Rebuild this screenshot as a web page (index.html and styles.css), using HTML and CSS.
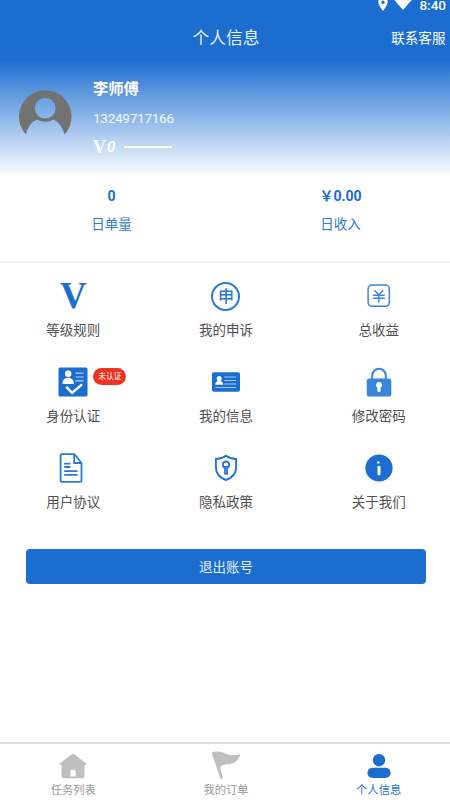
FILE: index.html
```html
<!DOCTYPE html>
<html lang="zh-CN">
<head>
<meta charset="utf-8">
<meta name="viewport" content="width=device-width, initial-scale=1">
<title>个人信息</title>
<link rel="stylesheet" href="styles.css">
</head>
<body>
<div class="page">
  <header class="top">
    <div class="status">
      <svg class="pin" width="10" height="14" viewBox="0 0 10 14"><path fill="#fff" fill-rule="evenodd" d="M5 0a4.700 4.700 0 0 0-4.700 4.700C.3 8.100 5 14 5 14s4.700-5.900 4.700-9.300A4.700 4.700 0 0 0 5 0zm0 3.500a1.700 1.700 0 1 1 0 3.400 1.700 1.700 0 0 1 0-3.400z"/></svg>
      <svg class="wifi" width="20" height="14" viewBox="0 0 20 14"><path fill="#fff" d="M0 2.500C5-1.200 15-1.200 20 2.500L10 14z"/></svg>
      <span>8:40</span>
    </div>
    <div class="titlebar">
      <h1>个人信息</h1>
      <a class="service">联系客服</a>
    </div>
  </header>

  <section class="profile">
    <svg class="avatar" width="54" height="54" viewBox="0 0 54 54"><path fill="#707372" fill-rule="evenodd" d="M8 44.500A26.300 26.300 0 1 1 46.500 44.500C44.500 37 40.500 31.500 35.500 29.500Q27.200 34 19 29.500C13.500 31.500 9.500 37 8 44.500zM27.200 7.800a10.400 10.400 0 1 0 0 20.800 10.400 10.400 0 0 0 0-20.800z"/></svg>
    <div class="who">
      <div class="name">李师傅</div>
      <div class="phone">13249717166</div>
      <div class="level"><span class="lv">V</span><span class="num">0</span><i class="bar"></i></div>
    </div>
  </section>

  <section class="stats">
    <div><b>0</b><span>日单量</span></div>
    <div><b>￥0.00</b><span>日收入</span></div>
  </section>

  <section class="menu">
    <div class="item"><div class="icon big-v">V</div><span>等级规则</span></div>
    <div class="item"><div class="icon"><i class="ring">申</i></div><span>我的申诉</span></div>
    <div class="item"><div class="icon"><svg width="24" height="24" viewBox="0 0 24 24"><g fill="none" stroke="#3a84da" stroke-width="1.500"><rect x="1.100" y="1.100" width="21.200" height="21.200" rx="3.800"/><path d="M7.300 6.200l4.500 4.600 4.500-4.600M5.800 11.200h12M5.800 14.200h12M11.800 10.800v7.600"/></g></svg></div><span>总收益</span></div>

    <div class="item">
      <div class="icon"><svg width="30" height="30" viewBox="0 0 30 30"><rect x=".5" y=".5" width="29" height="29" rx="1.500" fill="#1b6dcf"/><g fill="#fff"><circle cx="10.200" cy="6.800" r="3.200"/><path d="M4.500 17c0-4 2.300-6.200 5.700-6.200s5.700 2.200 5.700 6.200z"/></g><path d="M17.500 6.200h8M17.500 10h8M17.500 13.800h8" stroke="#b9d5f5" stroke-width="1.200"/><path d="M8.300 19.800l5.800 6L24 17.300" fill="none" stroke="#fff" stroke-width="2.400"/></svg><em class="badge">未认证</em></div>
      <span>身份认证</span>
    </div>
    <div class="item">
      <div class="icon"><svg width="30" height="22" viewBox="0 0 30 22"><rect x="1" y="1.300" width="28" height="19.400" rx="1.700" fill="#1b6dcf"/><path fill="#fff" d="M8.200 5c1.800 0 2.700 1.400 2.500 3-.1 1.100-.6 1.700-.9 2.300 1.600.7 2.400 1.500 2.400 3.400h-8c0-1.900.8-2.700 2.400-3.400-.4-.6-.8-1.200-.9-2.300C5.500 6.400 6.400 5 8.200 5z"/><path d="M13.300 6h11.700M13.300 9.500h11.700M13.300 13h11.700M4.500 16.500h20.500" stroke="#a9caef" stroke-width="1.100"/></svg></div>
      <span>我的信息</span>
    </div>
    <div class="item">
      <div class="icon"><svg width="26" height="30" viewBox="0 0 26 30"><path d="M6.200 13V8.500a6.800 6.800 0 0 1 13.600 0V13" fill="none" stroke="#3b86da" stroke-width="2"/><rect x=".7" y="11.500" width="24.600" height="18" rx="2.600" fill="#3b86da"/><path fill="#fff" d="M13 15a3.100 3.100 0 0 1 1.600 5.700v3.200q0 1-1 1h-1.200q-1 0-1-1v-3.200A3.100 3.100 0 0 1 13 15z"/></svg></div>
      <span>修改密码</span>
    </div>

    <div class="item">
      <div class="icon doc"><svg width="24" height="30" viewBox="0 0 24 30"><g fill="none" stroke="#2b79d6" stroke-width="1.800"><path d="M3 1.200h12.500L22.500 10v17.400q0 1.400-1.400 1.400H3q-1.400 0-1.400-1.400V2.600q0-1.400 1.400-1.400z" stroke-linejoin="round"/><path d="M15.200 1.500V10h7.200M5.200 10.600h6.200M5.200 14h6.200M5.200 18.200h13.400M5.200 21.800h13.400"/></g></svg></div>
      <span>用户协议</span>
    </div>
    <div class="item">
      <div class="icon"><svg width="24" height="28" viewBox="0 0 24 28"><g fill="none" stroke="#2373d3"><path d="M12 1.800Q7.500 5 1.900 5v8.500C1.900 20 6.500 24 12 26c5.500-2 10.100-6 10.100-12.500V5Q16.500 5 12 1.800z" stroke-width="1.900"/><circle cx="12" cy="10.700" r="3.200" stroke-width="1.900"/><path d="M12 12V20.600" stroke-width="3.800"/></g><path d="M12 13.500v5.500" stroke="#8bb8ec" stroke-width=".7"/></svg></div>
      <span>隐私政策</span>
    </div>
    <div class="item">
      <div class="icon"><svg width="28" height="28" viewBox="0 0 28 28"><circle cx="14" cy="14" r="13.600" fill="#1b6dcf"/><circle cx="13.300" cy="8.500" r="1.300" fill="#fff"/><rect x="12.500" y="11.800" width="3" height="9.500" rx="1.300" fill="#fff"/></svg></div>
      <span>关于我们</span>
    </div>
  </section>

  <button class="logout">退出账号</button>

  <nav class="tabs">
    <div class="tab"><svg width="28" height="26" viewBox="0 0 28 26"><path fill="#bfbfbf" fill-rule="evenodd" d="M12.800 1.300q1.200-.8 2.400 0L27 10.200q.6 1.300-.8 1.700h-.7v11q0 2.300-2.300 2.300H4.800q-2.300 0-2.300-2.300v-11h-.7Q.4 11.500 1 10.200zM11.400 23.500h5.300v-5.300q0-1.500-1.500-1.500h-2.300q-1.500 0-1.500 1.500z"/></svg><span>任务列表</span></div>
    <div class="tab"><svg width="30" height="30" viewBox="0 0 30 30"><path fill="#bfbfbf" d="M.6 1.800C4-.2 9 .3 13.500 2.200c5 2 9 2.600 15.800 1.300-1.300 5-4.800 8.500-10.300 9.600-4.500.8-8-.2-9.700 3.400l2.500 11.300-2.200.5z"/></svg><span>我的订单</span></div>
    <div class="tab"><svg width="26" height="26" viewBox="0 0 26 26"><g fill="#1b6dcf"><circle cx="13" cy="7.200" r="6.200"/><rect x="1.400" y="14.700" width="23.200" height="10.300" rx="5.100"/></g></svg><span class="active">个人信息</span></div>
  </nav>
</div>
</body>
</html>
```

FILE: styles.css
```css
* { box-sizing: border-box; }

html, body {
  margin: 0;
  height: 100%;
  overflow: hidden;
}

body {
  background: #fff;
  color: #505050;
  font-family: Roboto, "Noto Sans CJK SC", sans-serif;
  font-size: 13.5px;
}

svg { display: block; }
i, em { font-style: normal; }

/* The sheet is slightly wider than the window and bleeds off both sides. */
.page {
  width: 458px;
  height: 800px;
  margin-left: -3px;
  display: flex;
  flex-direction: column;
}

.top {
  height: 59px;
  flex: none;
  background: #1b6dcf;
  color: #fff;
}

.status {
  height: 16px;
  padding-right: 9px;
  display: flex;
  justify-content: flex-end;
  align-items: flex-start;
  font-size: 13.500px;
  font-weight: 500;
  line-height: 10px;
}

.status .pin { margin: -3px 5px 0 0; }
.status .wifi { margin: -4px 6px 0 0; }

.titlebar {
  height: 43px;
  display: grid;
  grid-template-columns: 1fr auto 1fr;
  align-items: center;
}

.titlebar h1 {
  grid-column: 2;
  margin: 0;
  font-size: 16.800px;
  font-weight: 400;
  line-height: 44px;
  color: #e8f1fc;
}

.service {
  justify-self: end;
  margin-top: -3px;
  padding-right: 9.500px;
  font-size: 13.600px;
}

.profile {
  height: 115px;
  flex: none;
  padding: 17px 0 0 21px;
  display: flex;
  gap: 21px;
  color: #fff;
  background: linear-gradient(#1b6dcf 0%, #3a80d7 13%, #f8fbff 100%);
}

.avatar { margin-top: 14px; }

.name {
  height: 25px;
  font-size: 15.300px;
  font-weight: 700;
  line-height: 26px;
}

.phone {
  height: 34px;
  font: 13.700px/35px Roboto, sans-serif;
  letter-spacing: -.35px;
  color: #f3f8ff;
}

.level {
  height: 24px;
  display: flex;
  align-items: center;
  font-weight: 700;
}

.lv { font: 700 18px "Liberation Serif", serif; }
.num { font-size: 15px; font-style: italic; margin-left: 1px; }
.bar { width: 48px; height: 2.500px; margin-left: 9px; background: #fff; border-radius: 1px; }

.stats {
  height: 89px;
  flex: none;
  display: grid;
  grid-template-columns: 1fr 1fr;
  padding-top: 8px;
  border-bottom: 2px solid #f3f3f3;
  text-align: center;
  color: #2f7bd8;
}

.stats b, .stats span {
  display: block;
  height: 28px;
  line-height: 28px;
}

.stats b { font-size: 14px; color: #1b6dcf; }

.menu {
  height: 258px;
  flex: none;
  margin-top: 11px;
  display: grid;
  grid-template-columns: repeat(3, 1fr);
  grid-template-rows: repeat(3, 86px);
}

.item {
  display: flex;
  flex-direction: column;
  align-items: center;
  padding-top: 6px;
}

.item > span { line-height: 25px; margin-top: 6px; }

.icon {
  position: relative;
  height: 32px;
  display: flex;
  align-items: center;
  justify-content: center;
}

.icon.doc { margin-left: -5px; }

.big-v {
  font: 700 37px/34px "Liberation Serif", serif;
  color: #1b6dcf;
}

.ring {
  width: 29px;
  height: 29px;
  border: 2px solid #2b79d6;
  border-radius: 50%;
  color: #2b79d6;
  font: 500 16px/23px "Noto Sans CJK SC", sans-serif;
  text-align: center;
}

.badge {
  position: absolute;
  left: 35px;
  top: 2px;
  width: 33px;
  height: 17px;
  border-radius: 9px;
  background: #ee3322;
  color: #fff;
  font-size: 7.800px;
  line-height: 17px;
  text-align: center;
}

.logout {
  width: 400px;
  height: 35px;
  flex: none;
  margin: 17px 0 0 29px;
  padding: 0;
  border: 0;
  border-radius: 4px;
  background: #1b6dcf;
  color: #e4eefb;
  font: inherit;
  line-height: 37px;
}

.tabs {
  height: 58px;
  flex: none;
  margin-top: auto;
  border-top: 2px solid #e0e0e0;
  display: grid;
  grid-template-columns: repeat(3, 1fr);
  font-size: 11.300px;
  color: #9a9a9a;
}

.tab {
  display: grid;
  grid-template-rows: 38px 18px;
  justify-items: center;
}

.tab svg { margin-top: 7px; }
.tab:nth-child(odd) svg { margin-top: 9px; }
.tab span { line-height: 18px; }
.tab .active { color: #1b6dcf; }
```
